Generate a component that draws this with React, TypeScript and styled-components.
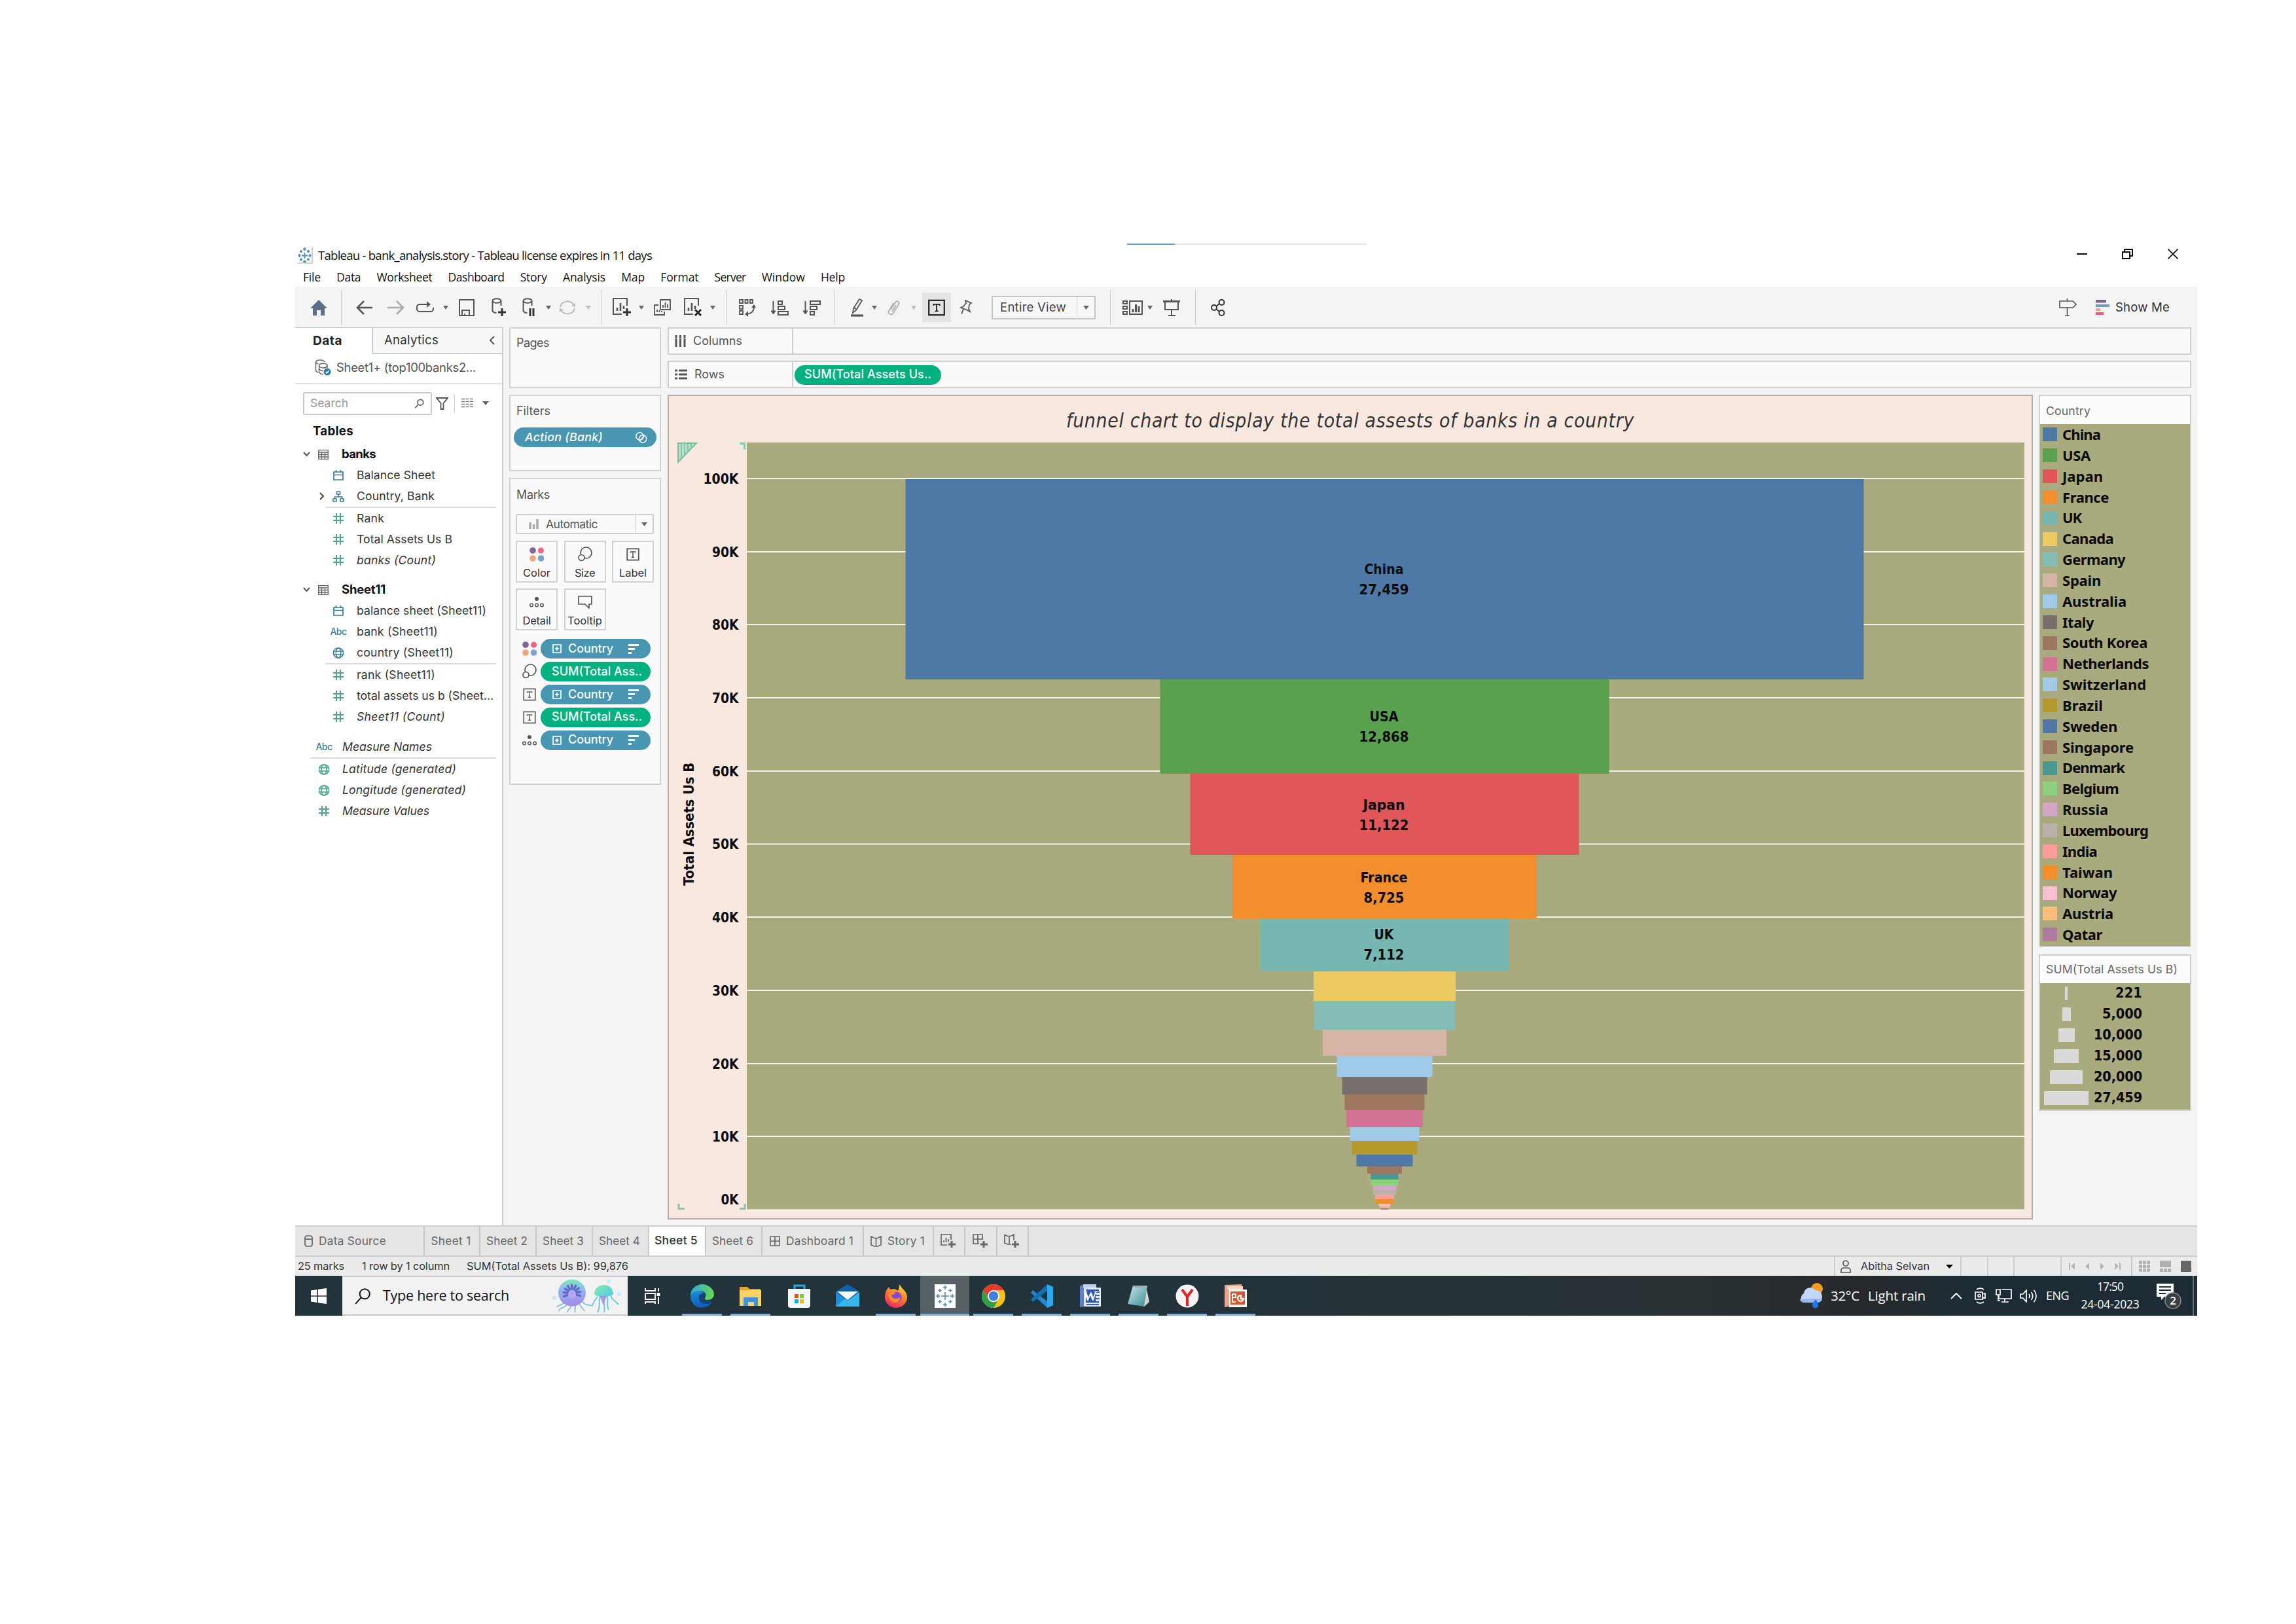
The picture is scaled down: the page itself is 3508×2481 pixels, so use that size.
import React, { useLayoutEffect, useRef, useState } from 'react';
import styled, { createGlobalStyle, css } from 'styled-components';

const UI = "Inter, 'Liberation Sans', sans-serif";
const SYS = "'Open Sans', 'Noto Sans', sans-serif";
const VIZ = "'DejaVu Sans Condensed', 'DejaVu Sans', sans-serif";

const Global = createGlobalStyle`
  *, *::before, *::after { box-sizing: border-box; }
  html, body { margin: 0; background: #fff; }
  svg { display: block; flex: none; }
`;

/* ---------- text ---------- */

type TextProps = {
  children: string;
  w?: number;
  size?: number;
  font?: string;
  weight?: number;
  italic?: boolean;
  color?: string;
};

const TextBox = styled.span<{ $size: number; $font: string; $weight: number; $italic?: boolean; $color: string }>`
  display: inline-block;
  flex: none;
  white-space: pre;
  line-height: 1.25;
  font-family: ${(p) => p.$font};
  font-size: ${(p) => p.$size}px;
  font-weight: ${(p) => p.$weight};
  font-style: ${(p) => (p.$italic ? 'italic' : 'normal')};
  font-stretch: ${(p) => (p.$font === VIZ ? 'condensed' : 'normal')};
  color: ${(p) => p.$color};
`;

/* Tracks its letters so that the run fills the given width. */
function Text({ children, w, size = 18, font = UI, weight = 400, italic, color = '#333' }: TextProps) {
  const ref = useRef<HTMLSpanElement>(null);
  const [tracking, setTracking] = useState(0);
  useLayoutEffect(() => {
    if (w && ref.current) setTracking((w - ref.current.getBoundingClientRect().width) / children.length);
  }, []);
  return (
    <TextBox ref={ref} $size={size} $font={font} $weight={weight} $italic={italic} $color={color} style={{ letterSpacing: tracking }}>
      {children}
    </TextBox>
  );
}

/* ---------- icons ---------- */

const Svg = ({ w, h, children, stroke = '#555', sw = 2 }: { w: number; h: number; children: React.ReactNode; stroke?: string; sw?: number }) => (
  <svg width={w} height={h} viewBox={`0 0 ${w} ${h}`} fill="none" stroke={stroke} strokeWidth={sw}>
    {children}
  </svg>
);

const Caret = ({ c = '#666', w = 8 }: { c?: string; w?: number }) => (
  <Svg w={w} h={6} stroke="none"><path d={`M0 0h${w}L${w / 2} 6z`} fill={c} /></Svg>
);

const HomeIcon = () => (
  <Svg w={26} h={24} stroke="none">
    <path d="M13 0L26 13h-4v11h-6v-8h-6v8H4V13H0z" fill="#5b6f88" />
  </Svg>
);
const BackIcon = () => <Svg w={26} h={22} sw={2.6}><path d="M13 1L3 11l10 10M3 11h23" /></Svg>;
const ForwardIcon = () => <Svg w={26} h={22} stroke="#aaa" sw={2.6}><path d="M14 1l10 10-10 10M24 11H0" /></Svg>;
const ReplayIcon = () => (
  <Svg w={27} h={22}>
    <path d="M11 6H5a4 4 0 0 0-4 4v3a4 4 0 0 0 4 4h17a4 4 0 0 0 4-4v-2" /><path d="M10 6h10" />
    <path d="M16 1l6 5-6 5z" fill="#555" stroke="none" />
  </Svg>
);
const SaveIcon = () => (
  <Svg w={24} h={26}><path d="M1 1h22v24H1zM5 25v-8h11v8M9 25v-3" /></Svg>
);
const Cylinder = ({ x = 0 }: { x?: number }) => (
  <g><ellipse cx={8 + x} cy="4.5" rx="6.5" ry="3.3" /><path d={`M${1.5 + x} 5v15c1 2 3 3 6 3M${14.5 + x} 5v7`} /></g>
);
const AddDataIcon = () => (
  <Svg w={22} h={29}><Cylinder /><path d="M16 16v12M10 22h12" stroke="#333" strokeWidth="3" /></Svg>
);
const PauseDataIcon = () => (
  <Svg w={20} h={29}><Cylinder /><path d="M12 16v12M17 16v12" stroke="#333" strokeWidth="3" /></Svg>
);
const RefreshIcon = () => (
  <Svg w={26} h={24} stroke="#bbb"><path d="M2 11a11 10 0 0 1 20-4M24 13a11 10 0 0 1-20 4" /><path d="M25 5v6l-6-2zM1 19v-6l6 2z" fill="#bbb" stroke="none" /></Svg>
);
const Chart = () => <g><path d="M22 12V1H1v24h13" /><path d="M7 20v-5M12 20V8M17 17v-5" strokeWidth="2.6" /></g>;
const NewSheetIcon = () => <Svg w={28} h={29}><Chart /><path d="M22 16v12M16 22h12" stroke="#333" strokeWidth="3" /></Svg>;
const ClearIcon = () => <Svg w={28} h={29}><Chart /><path d="M17 18l9 9M26 18l-9 9" stroke="#222" strokeWidth="3" /></Svg>;
const DuplicateIcon = () => (
  <Svg w={26} h={26} sw={1.8}><path d="M10 1h15v15H10zM7 9H1v15h15v-5M14 13v-4M17.500 13V5M21 13V8M5 20v-4M8.500 20v-3M12 20v-2" /></Svg>
);
const SwapIcon = () => (
  <Svg w={26} h={28} sw={1.8}>
    <path d="M1 2h5v5H1zM9.500 2h4v5h-4zM17 2h4v5h-4zM1 11h5v5H1zM1 19h5v5H1zM23 13c0 6-4 10-11 11" />
    <path d="M19 14l4-5 3 5zM14 19l-5 5 5 4z" fill="#555" stroke="none" />
  </Svg>
);
const SortAscIcon = () => (
  <Svg w={27} h={26}><path d="M3.500 3v17M11 3h6v5h-6zM11 11h10v5H11zM11 19h15v5H11z" /><path d="M0 18h7l-3.500 5z" fill="#555" stroke="#555" strokeWidth="1" /></Svg>
);
const SortDescIcon = () => (
  <Svg w={28} h={26}><path d="M4.500 3v17M12 3h15v5H12zM12 11h10v5H12zM12 19h6v5h-6z" /><path d="M1 18h7l-3.500 5z" fill="#555" stroke="#555" strokeWidth="1" /></Svg>
);
const PenIcon = () => (
  <Svg w={20} h={29} sw={1.8}><path d="M3 23l1-7 9-14 4 2-9 15zM5 15l4 3" /><path d="M0 27h19" strokeWidth="3.200" /></Svg>
);
const ClipIcon = () => (
  <Svg w={20} h={24} stroke="#b5b5b5"><path d="M5 15L12 4c2-4 7-1 5 3L9 20c-3 5-9 1-7-3L9 5M13 8L7 18" /></Svg>
);
const LabelGlyph = ({ s = 26, c = '#222' }: { s?: number; c?: string }) => (
  <Svg w={s} h={s} stroke={c} sw={s > 22 ? 2.2 : 1.8}>
    <rect x="1.200" y={s * 0.07} width={s - 2.4} height={s * 0.86} />
    <path d={`M${s * 0.32} ${s * 0.38}V${s * 0.3}h${s * 0.36}v${s * 0.08}M${s * 0.5} ${s * 0.3}v${s * 0.4}M${s * 0.4} ${s * 0.71}h${s * 0.2}`} strokeWidth={s > 22 ? 1.8 : 1.5} />
  </Svg>
);
const PinIcon = () => (
  <Svg w={20} h={24} sw={1.8}><path d="M9 1l9 4-3 2-1 7 2 4-6-3-8-3 4-2 4-5zM6 14l-3 8" /></Svg>
);
const CardsIcon = () => (
  <Svg w={31} h={22}><path d="M1 1h6v4H1zM1 9h6v4H1zM1 17h6v4H1zM11 1h19v20H11z" /><path d="M16 18v-5M20.500 18V6M25 18V9" strokeWidth="3" /></Svg>
);
const PresentIcon = () => (
  <Svg w={26} h={26}><path d="M0 3.500h26" strokeWidth="3" /><path d="M3 4v12h20V4M13 0v3M13 16v8M8 25h11" /></Svg>
);
const ShareIcon = () => (
  <Svg w={22} h={26} stroke="#333"><circle cx="5" cy="13" r="4" /><circle cx="16.500" cy="5" r="4" /><circle cx="16.500" cy="21" r="4" /><path d="M8 11l5-4M8 15l5 4" /></Svg>
);
const SignpostIcon = () => (
  <Svg w={27} h={27} sw={1.6}><path d="M1 4h20l5 5-5 5H1zM12.500 0v4M12.500 14v12M9 26h7" /></Svg>
);
const ShowMeIcon = () => (
  <Svg w={21} h={23} stroke="none">
    <path d="M0 0h16v4.500H0z" fill="#7b6592" /><path d="M0 7h21v4H0z" fill="#6d9cc9" />
    <path d="M0 13h7v4H0z" fill="#f6a27c" /><path d="M0 19h12v4H0z" fill="#ed5f78" />
  </Svg>
);
const AppBadge = () => (
  <svg width={23} height={26} viewBox="0 0 23 26" fill="none" strokeWidth="1.800">
    <path d="M22 1v24H0" stroke="#c4c4c4" strokeWidth="1.500" />
    <path d="M10.500 9v9M6 13.500h9M10.500 1v5M8 3.500h5M10.500 20.500v4M8 22.500h5M2.500 11v5M.500 13.500h4M18.500 11v5M16.500 13.500h4M5 5v4M3 7h4M16 5v4M14 7h4M5 17.500v4M3 19.500h4M16 17.500v4M14 19.500h4" stroke="#4790b8" />
  </svg>
);
const Search = ({ s, c = '#666', sw = 2 }: { s: number; c?: string; sw?: number }) => (
  <svg width={s} height={s} viewBox="0 0 24 24" fill="none" stroke={c} strokeWidth={sw}><circle cx="15" cy="9" r="7" /><path d="M10 14l-8 9" /></svg>
);
const FourDots = ({ s = 22 }: { s?: number }) => (
  <svg width={s} height={s} viewBox="0 0 22 22">
    <circle cx="5" cy="5" r="4.800" fill="#7d6796" /><circle cx="17.500" cy="5" r="4.500" fill="#f2657f" />
    <circle cx="5" cy="17" r="4.800" fill="#f3a474" /><circle cx="17.500" cy="17" r="4.800" fill="#7aa3d0" />
  </svg>
);
const SizeGlyph = () => (
  <Svg w={22} h={23} sw={1.7}><circle cx="12.500" cy="9.500" r="8.500" /><circle cx="5.500" cy="17" r="4.500" fill="#fafafa" /></Svg>
);
const DetailGlyph = () => (
  <Svg w={22} h={16} sw={1.5}><circle cx="11" cy="3" r="3" fill="#555" stroke="none" /><circle cx="3" cy="12.500" r="2.300" /><circle cx="11" cy="12.500" r="2.300" /><circle cx="19" cy="12.500" r="2.300" /></Svg>
);
const TooltipGlyph = () => <Svg w={22} h={20} sw={1.7}><path d="M1 1h20v12h-4v6l-6-6H1z" /></Svg>;

const TableIcon = () => (
  <Svg w={16} h={15} stroke="#666" sw={1.3}><path d="M.7.700h14.600v13.600H.7zM.7 4h14.600M.7 7.500h14.600M.7 11h14.600M5.500 4v10M10.500 4v10" /></Svg>
);
const CalendarIcon = () => <Svg w={16} h={16} stroke="#3a7d99" sw={1.7}><path d="M1 3h14v12H1zM1 7.500h14M4.500 0v4M11.500 0v4" /></Svg>;
const HierarchyIcon = () => (
  <Svg w={18} h={17} stroke="#3a7d99" sw={1.6}><path d="M6.500 1h5v4h-5zM1 12h5v4H1zM12 12h5v4h-5zM9 5v4M3.500 12V9h11v3" /></Svg>
);
const HashIcon = () => <Svg w={16} h={16} stroke="#4fa68b" sw={2}><path d="M5 0v16M11 0v16M0 5h16M0 11h16" /></Svg>;
const GlobeIcon = ({ c }: { c: string }) => (
  <Svg w={18} h={17} stroke={c} sw={1.5}><circle cx="9" cy="8.500" r="7.600" /><ellipse cx="9" cy="8.500" rx="3.700" ry="7.600" /><path d="M1 6h16M1 11h16" /></Svg>
);

/* ---------- frame ---------- */

const Page = styled.div`
  width: 3508px;
  height: 2481px;
  padding: 372px 0 0 451px;
  background: #fff;
  overflow: hidden;
`;
const Win = styled.div`
  width: 2906px;
  height: 1638px;
  display: flex;
  flex-direction: column;
`;
const Progress = styled.div`
  display: flex;
  height: 2px;
  flex: none;
  padding-left: 1271px;
  &::before { content: ''; width: 73px; background: #6ba3d2; }
  &::after { content: ''; width: 293px; background: #e2e4e8; }
`;
const TitleBar = styled.div`
  height: 35px;
  flex: none;
  display: flex;
  align-items: center;
  padding: 0 29px 4px 4px;
  gap: 8px;
`;
const WindowButtons = styled.div`
  margin-left: auto;
  display: flex;
  align-items: center;
  gap: 53px;
  padding-bottom: 4px;
`;
const Menu = styled.div`
  height: 29px;
  flex: none;
  display: flex;
  align-items: center;
  gap: 24.2px;
  padding-left: 12px;
`;
const Toolbar = styled.div`
  height: 62px;
  flex: none;
  display: flex;
  align-items: center;
  background: #f4f4f4;
  padding: 1px 42px 0 0;
`;
const Tool = styled.div<{ $ml: number; $w?: number }>`
  margin-left: ${(p) => p.$ml}px;
  width: ${(p) => (p.$w ? p.$w + 'px' : 'auto')};
  flex: none;
  display: flex;
  align-items: center;
  justify-content: center;
`;
const ActiveTool = styled(Tool)`
  height: 45px;
  background: #e4e4e4;
`;
const Divider = styled.div<{ $ml: number }>`
  width: 1px;
  height: 53px;
  flex: none;
  margin-left: ${(p) => p.$ml}px;
  background: #ccc;
`;
const Spacer = styled.div`flex: 1;`;
const ViewSelect = styled.div`
  margin-left: 29px;
  width: 159px;
  height: 36px;
  flex: none;
  display: flex;
  align-items: stretch;
  border: 2px solid #c4c4c4;
  background: #f8f8f8;
`;
const ViewValue = styled.div`
  flex: 1;
  display: flex;
  align-items: center;
  padding-left: 11px;
`;
const SelectArrow = styled.div<{ $w: number }>`
  width: ${(p) => p.$w}px;
  display: flex;
  align-items: center;
  justify-content: center;
  border-left: 1px solid #d0d0d0;
`;

const Body = styled.div`
  height: 1372px;
  flex: none;
  display: flex;
  background: #f4f4f4;
`;

/* ---------- data pane ---------- */

const DataPane = styled.div`
  width: 318px;
  flex: none;
  background: #fff;
  border-right: 2px solid #cfcfcf;
`;
const PaneTabs = styled.div`
  display: flex;
  height: 41px;
`;
const DataTab = styled.div`
  width: 117px;
  display: flex;
  align-items: center;
  padding-left: 27px;
  border-top: 1px solid #ccc;
`;
const AnalyticsTab = styled.div`
  flex: 1;
  display: flex;
  align-items: center;
  justify-content: space-between;
  padding: 0 11px 0 17px;
  background: #f8f8f8;
  border: solid #ccc;
  border-width: 1px 0 2px 2px;
`;
const SourceRow = styled.div`
  height: 46px;
  display: flex;
  align-items: center;
  gap: 8px;
  padding: 0 0 3px 30px;
  border-bottom: 2px solid #e2e2e2;
`;
const SearchRow = styled.div`
  height: 58px;
  display: flex;
  align-items: center;
  padding-left: 12px;
`;
const SearchBox = styled.div`
  width: 197px;
  height: 35px;
  display: flex;
  align-items: center;
  justify-content: space-between;
  padding: 0 10px 0 9px;
  border: 2px solid #ccc;
  border-radius: 2px;
  margin-right: 6px;
`;
const Thin = styled.div`
  width: 1px;
  height: 27px;
  background: #ccc;
  margin: 0 10px 0 9px;
`;
const TablesHead = styled.div`
  height: 33px;
  display: flex;
  align-items: center;
  padding: 0 0 6px 27px;
`;
const FieldRow = styled.div<{ $indent: number }>`
  height: 32px;
  display: flex;
  align-items: center;
  padding-left: ${(p) => p.$indent}px;
`;
const IconSlot = styled.div<{ $w: number }>`
  width: ${(p) => p.$w}px;
  flex: none;
  display: flex;
  justify-content: center;
  align-items: center;
`;
const Rule = styled.div<{ $ml: number }>`
  height: 2px;
  margin: 0 9px 0 ${(p) => p.$ml}px;
  background: #dcdcdc;
`;
const Gap = styled.div<{ $h: number }>`height: ${(p) => p.$h}px;`;

type FieldKind = 'date' | 'tree' | 'num' | 'abc' | 'geo' | 'geog';
const fieldIcon = (k: FieldKind) => {
  switch (k) {
    case 'date': return <CalendarIcon />;
    case 'tree': return <HierarchyIcon />;
    case 'num': return <HashIcon />;
    case 'geo': return <GlobeIcon c="#3a7d99" />;
    case 'geog': return <GlobeIcon c="#45a888" />;
    default: return <Text size={14} weight={500} color="#3a7d99" w={25}>Abc</Text>;
  }
};
const Field = ({ kind, name, w, italic, top, expand }: { kind: FieldKind; name: string; w: number; italic?: boolean; top?: boolean; expand?: boolean }) => (
  <FieldRow $indent={top ? 26 : 33}>
    {!top && <IconSlot $w={16}>{expand && <Svg w={8} h={12} stroke="#444"><path d="M1 1l5 5-5 5" /></Svg>}</IconSlot>}
    <IconSlot $w={top ? 36 : 34}>{fieldIcon(kind)}</IconSlot>
    <IconSlot $w={top ? 10 : 11} />
    <Text size={17.6} w={w} italic={italic}>{name}</Text>
  </FieldRow>
);
const TableRow = ({ name, w }: { name: string; w: number }) => (
  <FieldRow $indent={11}>
    <IconSlot $w={12}><Svg w={11} h={8} stroke="#555"><path d="M1 1l4.500 5L10 1" /></Svg></IconSlot>
    <IconSlot $w={40}><TableIcon /></IconSlot>
    <IconSlot $w={8} />
    <Text size={18.5} weight={650} color="#111" w={w}>{name}</Text>
  </FieldRow>
);

/* ---------- cards ---------- */

const Cards = styled.div`
  width: 232px;
  margin-left: 9px;
  flex: none;
  display: flex;
  flex-direction: column;
  gap: 10px;
`;
const Card = styled.div<{ $h: number }>`
  height: ${(p) => p.$h}px;
  flex: none;
  background: #fafafa;
  border: 2px solid #d2d2d2;
  display: flex;
  flex-direction: column;
`;
const CardTitle = styled.div<{ $h: number }>`
  height: ${(p) => p.$h}px;
  flex: none;
  display: flex;
  align-items: center;
  padding: 1px 0 0 9px;
`;
const Pill = styled.div<{ $w: number; $c: string; $pl: number }>`
  width: ${(p) => p.$w}px;
  height: 30px;
  flex: none;
  border-radius: 15px;
  background: ${(p) => p.$c};
  display: flex;
  align-items: center;
  padding: 0 14px 0 ${(p) => p.$pl}px;
`;
const FilterPill = styled(Pill)`
  margin: 3px 0 0 5px;
  justify-content: space-between;
`;
const MarkSelect = styled.div`
  margin: 6px 0 10px 8px;
  width: 211px;
  height: 31px;
  display: flex;
  border: 2px solid #d0d0d0;
  border-radius: 2px;
`;
const MarkValue = styled.div`
  flex: 1;
  display: flex;
  align-items: center;
  gap: 11px;
  padding-left: 18px;
`;
const MarkGrid = styled.div`
  display: grid;
  grid-template-columns: repeat(3, 64px);
  grid-auto-rows: 64px;
  gap: 9px 9.500px;
  padding-left: 8px;
`;
const MarkButton = styled.div`
  border: 2px solid #d2d2d2;
  display: flex;
  flex-direction: column;
  align-items: center;
  justify-content: space-between;
  padding-bottom: 2px;
`;
const MarkIcon = styled.div`
  height: 38px;
  display: flex;
  align-items: center;
`;
const Encodings = styled.div`
  padding: 13px 0 0 18px;
  display: flex;
  flex-direction: column;
  gap: 4.9px;
`;
const Encoding = styled.div`
  display: flex;
  align-items: center;
`;
const Dim = () => (
  <Pill $w={168} $c="#4996b2" $pl={18}>
    <Svg w={14} h={14} stroke="#fff" sw={1.7}><path d="M1 1h12v12H1zM7 4v6M4 7h6" /></Svg>
    <IconSlot $w={10} />
    <Text size={18} weight={550} color="#fff" w={69}>Country</Text>
    <Spacer />
    <Svg w={16} h={15} stroke="none"><path d="M0 0h16v3H0zM0 6h10v3H0zM0 12h5v3H0z" fill="#fff" /></Svg>
    <IconSlot $w={4} />
  </Pill>
);
const Measure = () => (
  <Pill $w={168} $c="#00b180" $pl={17}><Text size={18} weight={500} color="#fff" w={138}>SUM(Total Ass..</Text></Pill>
);

/* ---------- shelves + view ---------- */

const Main = styled.div`
  width: 2328px;
  margin-left: 10px;
  display: flex;
  flex-direction: column;
`;
const Shelf = styled.div`
  height: 42px;
  flex: none;
  display: flex;
  border: 2px solid #d0d0d0;
  background: #fafafa;
  margin-bottom: 9px;
`;
const ShelfHead = styled.div`
  width: 190px;
  display: flex;
  align-items: center;
  gap: 11px;
  padding-left: 9px;
  border-right: 2px solid #d0d0d0;
`;
const ShelfBody = styled.div`
  flex: 1;
  display: flex;
  align-items: center;
  padding: 1px 0 0 2px;
`;
const ViewRow = styled.div`
  display: flex;
  align-items: flex-start;
  gap: 9px;
  padding-top: 1px;
`;
const Viz = styled.div`
  width: 2086px;
  height: 1260px;
  background: #f9e8e0;
  border: 2px solid #b5b0ad;
  display: flex;
  flex-direction: column;
`;
const VizTitle = styled.div`
  height: 71px;
  flex: none;
  display: flex;
  align-items: center;
  justify-content: center;
  padding-top: 4px;
`;
const Legends = styled.div`
  width: 233px;
  display: flex;
  flex-direction: column;
  gap: 11px;
`;
const Legend = styled.div<{ $h: number }>`
  height: ${(p) => p.$h}px;
  border: 2px solid #cfcfcf;
  background: #a9aa7e;
  display: flex;
  flex-direction: column;
`;
const LegendHead = styled.div<{ $h: number; $pt: number }>`
  height: ${(p) => p.$h}px;
  flex: none;
  background: #fcfcfc;
  display: flex;
  align-items: center;
  padding: ${(p) => p.$pt}px 0 0 9px;
`;
const LegendItems = styled.div`
  flex: none;
  display: flex;
  flex-direction: column;
`;
const LegendItem = styled.div`
  height: 31.84px;
  display: flex;
  align-items: center;
  padding-left: 4px;
  gap: 8px;
`;
const Swatch = styled.div<{ $c: string }>`
  width: 22px;
  height: 21px;
  background: ${(p) => p.$c};
`;
const SizeItem = styled.div`
  height: 31.84px;
  display: flex;
  align-items: center;
`;
const SizeCell = styled.div`
  width: 80px;
  display: flex;
  justify-content: center;
`;
const SizeBar = styled.div<{ $w: number }>`
  width: ${(p) => p.$w}px;
  height: 21px;
  background: #d9d9d9;
`;
const SizeValue = styled.div`
  width: 76px;
  display: flex;
  justify-content: flex-end;
`;

type Country = { name: string; w: number; bottom: number; color: string; tw: number; label?: [string, number, number, number] };
const countries: Country[] = [
  { name: 'China', w: 1464, bottom: 1038, color: '#4e79a7', tw: 58, label: ['27,459', 60, 76, 869] },
  { name: 'USA', w: 686, bottom: 1182, color: '#59a14f', tw: 43, label: ['12,868', 44, 76, 1094] },
  { name: 'Japan', w: 594, bottom: 1306, color: '#e15759', tw: 62, label: ['11,122', 64, 76, 1229] },
  { name: 'France', w: 465, bottom: 1403, color: '#f28e2b', tw: 71, label: ['8,725', 72, 62, 1340] },
  { name: 'UK', w: 379, bottom: 1484, color: '#76b7b2', tw: 29, label: ['7,112', 30, 62, 1427] },
  { name: 'Canada', w: 217, bottom: 1529, color: '#eecb62', tw: 78 },
  { name: 'Germany', w: 215, bottom: 1573, color: '#86bcb6', tw: 96 },
  { name: 'Spain', w: 189, bottom: 1613, color: '#d7b5a6', tw: 59 },
  { name: 'Australia', w: 146, bottom: 1645, color: '#a0cbe8', tw: 98 },
  { name: 'Italy', w: 130, bottom: 1672, color: '#79706e', tw: 48 },
  { name: 'South Korea', w: 122, bottom: 1696, color: '#9d7660', tw: 130 },
  { name: 'Netherlands', w: 117, bottom: 1722, color: '#d37295', tw: 132 },
  { name: 'Switzerland', w: 106, bottom: 1743, color: '#a0cbe8', tw: 128 },
  { name: 'Brazil', w: 100, bottom: 1764, color: '#b6992d', tw: 62 },
  { name: 'Sweden', w: 86, bottom: 1782, color: '#4e79a7', tw: 84 },
  { name: 'Singapore', w: 53, bottom: 1793, color: '#9d7660', tw: 109 },
  { name: 'Denmark', w: 42, bottom: 1802, color: '#499894', tw: 95 },
  { name: 'Belgium', w: 42, bottom: 1811, color: '#8cd17d', tw: 86 },
  { name: 'Russia', w: 36, bottom: 1818, color: '#d4a6c8', tw: 70 },
  { name: 'Luxembourg', w: 35, bottom: 1825, color: '#bab0ac', tw: 131 },
  { name: 'India', w: 29, bottom: 1832, color: '#ff9d9a', tw: 53 },
  { name: 'Taiwan', w: 28, bottom: 1839, color: '#f28e2b', tw: 77 },
  { name: 'Norway', w: 18, bottom: 1842.5, color: '#fabfd2', tw: 83 },
  { name: 'Austria', w: 15, bottom: 1845.500, color: '#ffbe7d', tw: 78 },
  { name: 'Qatar', w: 12, bottom: 1848, color: '#b07aa1', tw: 61 },
];
const ticks: [string, number][] = [
  ['100K', 731], ['90K', 843], ['80K', 954], ['70K', 1066], ['60K', 1178],
  ['50K', 1289.5], ['40K', 1401], ['30K', 1513], ['20K', 1625], ['10K', 1736],
];

const VizText = styled.text<{ $anchor?: string }>`
  font-family: ${VIZ};
  font-stretch: condensed;
  font-size: 21.5px;
  font-weight: 700;
  fill: #0b0b0b;
  text-anchor: ${(p) => p.$anchor || 'middle'};
`;

const Funnel = () => (
  <svg width={2082} height={1185} viewBox="1022 676 2082 1185">
    <rect x="1141" y="676" width="1952" height="1172" fill="#a9aa7e" />
    <rect x="1141" y="1847.500" width="1952" height="2" fill="#fdf6f1" />
    {ticks.map(([t, y]) => (
      <g key={t}>
        <rect x="1141" y={y - 1} width="1952" height="2" fill="#f6f4ea" />
        <VizText $anchor="end" x="1128.500" y={y + 7.5} textLength={t.length === 4 ? 54 : 40.500} lengthAdjust="spacingAndGlyphs">{t}</VizText>
      </g>
    ))}
    <VizText $anchor="end" x="1128.500" y="1839.500" textLength="27" lengthAdjust="spacingAndGlyphs">0K</VizText>
    <VizText transform="translate(1059.500 1259) rotate(-90)" x="0" y="0" textLength="188" lengthAdjust="spacingAndGlyphs">Total Assets Us B</VizText>
    {countries.map((c, i) => {
      const top = i ? countries[i - 1].bottom : 732;
      return <rect key={c.name} x={2115.5 - c.w / 2} y={top} width={c.w} height={c.bottom - top} fill={c.color} />;
    })}
    {countries.map((c) => c.label && (
      <g key={c.name}>
        <VizText x="2114.500" y={c.label[3] + 7.5} textLength={c.label[1]} lengthAdjust="spacingAndGlyphs">{c.name}</VizText>
        <VizText x="2114.500" y={c.label[3] + 39} textLength={c.label[2]} lengthAdjust="spacingAndGlyphs">{c.label[0]}</VizText>
      </g>
    ))}
    <g fill="none" stroke="#86c5ac" strokeWidth="3">
      <path d="M1130 677.500h7.500v9M1037 1839v7.500h9M1138 1839v7.500h-8" />
    </g>
    <path d="M1036 677h28l-28 29z" fill="#b9e0cd" stroke="#79bf9f" strokeWidth="2" />
    <path d="M1041 678v22M1046 678v17M1051 678v12M1056 678v7" stroke="#79bf9f" strokeWidth="1.500" />
  </svg>
);

/* ---------- bottom ---------- */

const SheetTabs = styled.div`
  height: 46px;
  flex: none;
  display: flex;
  background: #e5e5e5;
  border-top: 2px solid #cdcdcd;
`;
const SheetTab = styled.div<{ $w: number; $on?: boolean; $pl?: number }>`
  width: ${(p) => p.$w}px;
  flex: none;
  display: flex;
  align-items: center;
  justify-content: ${(p) => (p.$pl ? 'flex-start' : 'center')};
  gap: 9px;
  padding: 0 ${(p) => (p.$pl ? 0 : 3)}px 0 ${(p) => p.$pl || 0}px;
  border-right: 2px solid #c8c8c8;
  ${(p) => p.$on && css`background: #fff; padding-bottom: 3px;`}
`;
const Status = styled.div`
  height: 31px;
  flex: none;
  display: flex;
  align-items: center;
  background: #ebebeb;
  border-top: 2px solid #cfcfcf;
  padding-left: 4px;
`;
const StatusCell = styled.div<{ $w: number; $pl?: number; $gap?: number }>`
  width: ${(p) => p.$w}px;
  height: 100%;
  display: flex;
  align-items: center;
  gap: ${(p) => p.$gap || 0}px;
  padding-left: ${(p) => p.$pl || 0}px;
  border-left: 2px solid #cbcbcb;
`;
const Taskbar = styled.div`
  height: 61px;
  flex: none;
  display: flex;
  background: linear-gradient(90deg, #22333b 0, #22333b 45%, #293134 74%, #26292c 82%, #1d2c34 88%);
`;
const Start = styled.div`
  width: 72px;
  display: flex;
  align-items: center;
  justify-content: center;
`;
const TaskSearch = styled.div`
  width: 436px;
  display: flex;
  align-items: center;
  padding-left: 18px;
  background: #f2f2f2;
  border: solid #c9c9c9;
  border-width: 2px 0 2px 0;
`;
const TaskView = styled.div`
  width: 77px;
  display: flex;
  align-items: center;
  justify-content: center;
`;
const TaskApp = styled.div<{ $run?: boolean; $on?: boolean }>`
  width: 74.1px;
  position: relative;
  display: flex;
  align-items: center;
  justify-content: center;
  background: ${(p) => (p.$on ? '#566166' : 'transparent')};
  &::after {
    content: '';
    position: absolute;
    bottom: 0;
    left: ${(p) => (p.$on ? 0 : 6)}px;
    right: ${(p) => (p.$on ? 0 : 7)}px;
    height: ${(p) => (p.$run ? 3 : 0)}px;
    background: #76b0f0;
  }
`;
const Tray = styled.div<{ $ml: number }>`
  margin-left: ${(p) => p.$ml}px;
  flex: none;
  display: flex;
  align-items: center;
`;
const Clock = styled.div`
  width: 90px;
  margin-left: 18px;
  display: flex;
  flex-direction: column;
  align-items: center;
  justify-content: center;
  gap: 5px;
`;

const I = ({ children }: { children: React.ReactNode }) => <svg width={38} height={38} viewBox="0 0 38 38">{children}</svg>;

const Edge = () => (
  <I>
    <defs>
      <linearGradient id="eg1" x1="0" y1="0" x2="1" y2="0.300"><stop offset="0" stopColor="#2aa5e0" /><stop offset="1" stopColor="#62d65a" /></linearGradient>
      <linearGradient id="eg2" x1="0" y1="0" x2="0" y2="1"><stop offset="0" stopColor="#1a8fd8" /><stop offset="1" stopColor="#0c5bb5" /></linearGradient>
    </defs>
    <path d="M1 19C1 8 9 1 19 1s18 8 18 15c0 6-5 9-10 9-4 0-5-2-4-3 4-6-1-11-7-11C8 11 2 15 1 19z" fill="url(#eg1)" />
    <path d="M1 19c1-5 6-8 13-8 4 0 7 2 8 4-6-1-9 4-8 9 2 7 11 9 19 5-4 6-10 8-15 8C8 37 1 29 1 19z" fill="url(#eg2)" />
    <path d="M14 24c-1-5 2-9 8-9 2 3 1 6 0 8-1 3 8 4 12 2l-1 4c-8 4-17 2-19-5z" fill="#114f9e" opacity=".6" />
  </I>
);
const Explorer = () => (
  <I><path d="M2 5h12l3 3h17v26H2z" fill="#e0a52d" /><path d="M2 10h33v24H2z" fill="#fbd468" /><path d="M8 34V21h22v13h-6v-6h-9v6z" fill="#3f93d6" /></I>
);
const Store = () => (
  <I><path d="M12 9V3h15v6" fill="none" stroke="#25aee4" strokeWidth="3" /><path d="M2 8h34v25q0 4-4 4H6q-4 0-4-4z" fill="#f4f6f7" />
    <path d="M12 16h6v6h-6z" fill="#f1511b" /><path d="M20 16h6v6h-6z" fill="#80cc28" /><path d="M12 24h6v6h-6z" fill="#00adef" /><path d="M20 24h6v6h-6z" fill="#fbbc09" /></I>
);
const Mail = () => (
  <I><path d="M1 12L19 1l18 11v23H1z" fill="#1360a5" /><path d="M3 12h32L19 25z" fill="#fff" /><path d="M1 13l18 13L1 35z" fill="#1a90df" /><path d="M37 13L19 26l-4-3L1 35h36z" fill="#38b6ec" /></I>
);
const Firefox = () => (
  <I>
    <defs><linearGradient id="ff" x1="0.800" y1="0" x2="0.300" y2="1"><stop offset="0" stopColor="#ffe13d" /><stop offset=".5" stopColor="#ff7a26" /><stop offset="1" stopColor="#f3226d" /></linearGradient></defs>
    <path d="M5 9l3-4 2 4 4-1c3 0 6 1 8 3 2-3 1-7 3-10 1 5 5 7 8 11 2 3 3 6 3 9a17 16 0 0 1-34 0c0-5 1-9 3-12z" fill="url(#ff)" />
    <circle cx="19" cy="21" r="8.500" fill="#8349d6" /><path d="M8 13c4-2 8-1 11 2-3 0-4 2-7 2 0 4 3 6 7 6 3 0 5-1 6-3 1 6-4 10-9 9-6-1-10-9-8-16z" fill="#ff8d2c" />
  </I>
);
const TableauApp = () => (
  <I><path d="M3 1h32v36H3z" fill="#fff" /><path d="M19 13v12M13 19h12M19 3v6M16 6h6M19 29v6M16 32h6M8 16v6M5 19h6M30 16v6M27 19h6M11 8v5M8.500 10.500h5M27 8v5M24.500 10.500h5M11 25v5M8.500 27.500h5M27 25v5M24.500 27.500h5" stroke="#4a8db8" strokeWidth="1.600" /></I>
);
const Chrome = () => (
  <I><circle cx="19" cy="19" r="18" fill="#fbc116" /><path d="M3.400 10A18 18 0 0 1 34.600 10H19a9 9 0 0 0-8.500 6z" fill="#e33b2e" /><path d="M3.400 10A18 18 0 0 0 19 37l8-13.500a9 9 0 0 1-16 0z" fill="#2da04e" /><path d="M3.400 10l8 13a9 9 0 0 1 7.600-13z" fill="#e33b2e" /><circle cx="19" cy="19" r="9" fill="#fff" /><circle cx="19" cy="19" r="7.300" fill="#3d7fe6" /></I>
);
const VsCode = () => (
  <I><path d="M27 1l9 4v28l-9 4L2 14l3-4 22 17z" fill="#1f8ad2" /><path d="M27 1v10L5 28l-3-4z" fill="#1370b3" /><path d="M27 1l9 4v28l-9 4z" fill="#2ba7ee" /></I>
);
const GlyphT = styled.text`
  font-family: 'Liberation Serif', serif;
  font-weight: 700;
  font-size: 21px;
`;
const Word = () => (
  <I><path d="M3 3l24-2v32L3 36z" fill="#5c80c8" /><path d="M8 1h20v5H8z" fill="#c4d2f0" /><path d="M9 6h26v29H9z" fill="#dfe7f8" /><path d="M12 9h20v20H12z" fill="#2f56ac" /><path d="M27 11h6v16h-6z" fill="#dfe7f8" /><path d="M27 13h6M27 18h6M27 23h6M13 32h19" stroke="#3c62b6" strokeWidth="2" /><GlyphT x="8" y="26" fill="#fff">W</GlyphT></I>
);
const Notepad = () => (
  <I>
    <defs><linearGradient id="np" x1="0" y1="0" x2="1" y2="1"><stop offset="0" stopColor="#c6e9ea" /><stop offset="1" stopColor="#3c8b96" /></linearGradient></defs>
    <path d="M30 4l5 24-9 8z" fill="#d9d9d2" /><path d="M10 3h22l-5 32L2 31z" fill="url(#np)" /><path d="M10 3h22v3H9z" fill="#9eb0b2" />
  </I>
);
const Yandex = () => (
  <I><circle cx="19" cy="19" r="17.500" fill="#f6f3f3" /><path d="M11 9l8 11 8-11M19 19v15" fill="none" stroke="#e0262b" strokeWidth="4" /></I>
);
const PowerPoint = () => (
  <I><path d="M2 2l26-1v30L2 36z" fill="#f0a386" /><path d="M6 4h24v5H6z" fill="#fbd9cc" /><path d="M9 9h27v27H9z" fill="#fff" /><path d="M11 12h22v20H11z" fill="#dc5127" /><path d="M14 16h5v5h-5zM14 16v12h5" stroke="#fff" strokeWidth="2" fill="none" /><path d="M27 18a4.500 4.500 0 1 0 4 5h-4z" fill="none" stroke="#fff" strokeWidth="2.400" /></I>
);
const Jellies = () => (
  <svg width={107} height={54} viewBox="0 0 107 54" fill="none">
    <defs>
      <linearGradient id="j1" x1="0.500" y1="0" x2="0.500" y2="1"><stop offset="0" stopColor="#7eeab4" /><stop offset=".35" stopColor="#8fb9ee" /><stop offset="1" stopColor="#a488ea" /></linearGradient>
      <linearGradient id="j2" x1="0" y1="0" x2="1" y2="1"><stop offset="0" stopColor="#86efa9" /><stop offset="1" stopColor="#4cc6e6" /></linearGradient>
    </defs>
    <path d="M24 38c-2 8-12 5-13 12M30 40c0 8-6 6-6 12M36 40c1 6-2 8 0 12M42 38c2 8 6 6 8 12M46 34c4 8 10 6 16 8M20 36c-4 6-10 4-12 8" stroke="#7fc3dd" strokeWidth="1.800" />
    <ellipse cx="31" cy="22" rx="21" ry="20.500" fill="url(#j1)" />
    {Array.from({ length: 9 }, (_, i) => <path key={i} d="M31 10v6" stroke="#5d69c4" strokeWidth="3.400" strokeLinecap="round" transform={`rotate(${i * 27 - 110} 31 23)`} />)}
    <circle cx="31" cy="25" r="6" fill="#b7a5f2" />
    <path d="M74 28c-4 8 2 12-4 24M80 28c-2 8 2 14 0 24M85 28c2 8-2 12 2 20M90 26c2 8 8 8 12 14M70 28c-4 6-6 6-8 14" stroke="#55cfd6" strokeWidth="1.800" />
    <path d="M65 24c0-9 7-14 15-14s14 6 14 14c-4 3-6 2-9 4-4 2-8 2-11 0-4-1-6-1-9-4z" fill="url(#j2)" /><path d="M73 27l6 14 5-14z" fill="#a987e8" opacity=".8" />
    <circle cx="4" cy="30" r="3" fill="#c6e4f5" /><circle cx="87" cy="5" r="3" fill="#cdeef2" /><circle cx="103" cy="24" r="3" fill="#cfe6f8" />
  </svg>
);
const Weather = () => (
  <svg width={38} height={40} viewBox="0 0 38 40">
    <circle cx="28" cy="9" r="9" fill="#f79a1e" />
    <path d="M8 30a8 8 0 0 1 0-14C9 7 20 4 26 11c8 0 12 8 9 14-1 3-4 5-7 5z" fill="#c3d6f8" />
    <path d="M2 24h34c0 4-4 6-8 6H8c-3 0-6-3-6-6z" fill="#98b8f2" />
    <path d="M26 25c3 4 4 6 4 9a4 4 0 0 1-9 0c0-4 3-6 5-9z" fill="#1c78ec" />
  </svg>
);

const sys = { font: SYS, color: '#111' };

export default function App() {
  return (
    <Page>
      <Global />
      <Win>
        <Progress />
        <TitleBar>
          <AppBadge />
          <Text {...sys} size={18.6} w={510}>Tableau - bank_analysis.story - Tableau license expires in 11 days</Text>
          <WindowButtons>
            <Svg w={16} h={2} stroke="#000"><path d="M0 1h16" /></Svg>
            <Svg w={17} h={16} stroke="#000" sw={1.8}><path d="M1 5h11v10H1zM4 5V1h12v10h-4" /></Svg>
            <Svg w={16} h={16} stroke="#000" sw={1.6}><path d="M.500.500l15 15M15.500.500l-15 15" /></Svg>
          </WindowButtons>
        </TitleBar>
        <Menu>
          {([['File', 27], ['Data', 37], ['Worksheet', 85], ['Dashboard', 86], ['Story', 41], ['Analysis', 65], ['Map', 36], ['Format', 58], ['Server', 48], ['Window', 66], ['Help', 37]] as [string, number][]).map(([t, w]) => (
            <Text key={t} {...sys} size={17.5} w={w}>{t}</Text>
          ))}
        </Menu>
        <Toolbar>
          <Tool $ml={23}><HomeIcon /></Tool>
          <Divider $ml={21} />
          <Tool $ml={21}><BackIcon /></Tool>
          <Tool $ml={23}><ForwardIcon /></Tool>
          <Tool $ml={18}><ReplayIcon /></Tool>
          <Tool $ml={14}><Caret /></Tool>
          <Tool $ml={16}><SaveIcon /></Tool>
          <Tool $ml={26}><AddDataIcon /></Tool>
          <Tool $ml={25}><PauseDataIcon /></Tool>
          <Tool $ml={16}><Caret /></Tool>
          <Tool $ml={12}><RefreshIcon /></Tool>
          <Tool $ml={15}><Caret c="#bbb" /></Tool>
          <Divider $ml={15} />
          <Tool $ml={17}><NewSheetIcon /></Tool>
          <Tool $ml={12}><Caret /></Tool>
          <Tool $ml={15}><DuplicateIcon /></Tool>
          <Tool $ml={20}><ClearIcon /></Tool>
          <Tool $ml={12}><Caret /></Tool>
          <Divider $ml={16} />
          <Tool $ml={19}><SwapIcon /></Tool>
          <Tool $ml={23}><SortAscIcon /></Tool>
          <Tool $ml={21}><SortDescIcon /></Tool>
          <Divider $ml={21} />
          <Tool $ml={24}><PenIcon /></Tool>
          <Tool $ml={12}><Caret /></Tool>
          <Tool $ml={16}><ClipIcon /></Tool>
          <Tool $ml={16}><Caret c="#bbb" /></Tool>
          <ActiveTool $ml={9} $w={44}><LabelGlyph /></ActiveTool>
          <Tool $ml={13}><PinIcon /></Tool>
          <ViewSelect>
            <ViewValue><Text size={18.6} w={101} color="#444">Entire View</Text></ViewValue>
            <SelectArrow $w={27}><Caret w={9} /></SelectArrow>
          </ViewSelect>
          <Divider $ml={22} />
          <Tool $ml={18}><CardsIcon /></Tool>
          <Tool $ml={7}><Caret /></Tool>
          <Tool $ml={16}><PresentIcon /></Tool>
          <Divider $ml={23} />
          <Tool $ml={23}><ShareIcon /></Tool>
          <Spacer />
          <Tool $ml={0}><SignpostIcon /></Tool>
          <Tool $ml={29}><ShowMeIcon /></Tool>
          <Tool $ml={9}><Text size={18.600} w={83}>Show Me</Text></Tool>
        </Toolbar>

        <Body>
          <DataPane>
            <PaneTabs>
              <DataTab><Text size={19} weight={650} color="#222" w={45}>Data</Text></DataTab>
              <AnalyticsTab><Text size={18.6} w={83}>Analytics</Text><Svg w={9} h={14}><path d="M8 1L2 7l6 6" /></Svg></AnalyticsTab>
            </PaneTabs>
            <SourceRow>
              <Svg w={25} h={25} sw={1.500} stroke="#666">
                <path d="M15 4C13 0 3 0 1.500 4v13c1 2 3 3 4 3M1.500 4c1 2 3 3 4 3" /><path d="M19 10c0-5-12-5-12.500 0v9c1 2 3 4 6 4M6.500 10c2 4 10 4 12.500 0v3M6.500 15c2 2 4 2.500 6 2.500" />
                <circle cx="19" cy="19" r="5.500" fill="#2d7ea6" stroke="none" /><path d="M16.500 19l2 2 3-4" stroke="#fff" />
              </Svg>
              <Text size={18.4} w={213} color="#555">Sheet1+ (top100banks2...</Text>
            </SourceRow>
            <SearchRow>
              <SearchBox><Text size={17.6} w={58} color="#999">Search</Text><Search s={15} sw={2.8} /></SearchBox>
              <Svg w={19} h={19} sw={1.8}><path d="M1 1h17l-6.500 8v9h-4V9z" /></Svg>
              <Thin />
              <Svg w={18} h={16} stroke="#777" sw={1.5}><path d="M0 1.500h18M0 5.500h18M0 9.500h18M0 13.500h18" strokeDasharray="5 1.500" /></Svg>
              <IconSlot $w={14} />
              <Caret w={10} />
            </SearchRow>
            <TablesHead><Text size={18.600} weight={650} color="#111" w={62}>Tables</Text></TablesHead>
            <TableRow name="banks" w={52} />
            <Field kind="date" name="Balance Sheet" w={120} />
            <Field kind="tree" name="Country, Bank" w={119} expand />
            <Rule $ml={46} />
            <Field kind="num" name="Rank" w={42} />
            <Field kind="num" name="Total Assets Us B" w={146} />
            <Field kind="num" name="banks (Count)" w={121} italic />
            <Gap $h={13} />
            <TableRow name="Sheet11" w={67} />
            <Field kind="date" name="balance sheet (Sheet11)" w={198} />
            <Field kind="abc" name="bank (Sheet11)" w={124} />
            <Field kind="geo" name="country (Sheet11)" w={148} />
            <Rule $ml={46} />
            <Field kind="num" name="rank (Sheet11)" w={120} />
            <Field kind="num" name="total assets us b (Sheet..." w={209} />
            <Field kind="num" name="Sheet11 (Count)" w={135} italic />
            <Gap $h={14} />
            <Field kind="abc" name="Measure Names" w={137} italic top />
            <Rule $ml={23} />
            <Field kind="geog" name="Latitude (generated)" w={174} italic top />
            <Field kind="geog" name="Longitude (generated)" w={189} italic top />
            <Field kind="num" name="Measure Values" w={133} italic top />
          </DataPane>

          <Cards>
            <Card $h={93}><CardTitle $h={43}><Text size={18} w={50} color="#555">Pages</Text></CardTitle></Card>
            <Card $h={117}>
              <CardTitle $h={45}><Text size={18} w={52} color="#555">Filters</Text></CardTitle>
              <FilterPill $w={218} $c="#4996b2" $pl={17}>
                <Text size={17.8} weight={500} italic color="#fff" w={119}>Action (Bank)</Text>
                <Svg w={19} h={17} stroke="#fff" sw={1.500}><circle cx="7.500" cy="6.500" r="5.700" /><circle cx="12" cy="10.500" r="5.700" /><path d="M8 13l7-8" /></Svg>
              </FilterPill>
            </Card>
            <Card $h={469}>
              <CardTitle $h={47}><Text size={18} w={51} color="#555">Marks</Text></CardTitle>
              <MarkSelect>
                <MarkValue>
                  <Svg w={15} h={15} stroke="#aaa" sw={3.500}><path d="M2 15V5M7.500 15V8M13 15V0" /></Svg>
                  <Text size={17.6} w={79} color="#555">Automatic</Text>
                </MarkValue>
                <SelectArrow $w={27}><Caret w={9} /></SelectArrow>
              </MarkSelect>
              <MarkGrid>
                <MarkButton><MarkIcon><FourDots /></MarkIcon><Text size={16.500} w={42}>Color</Text></MarkButton>
                <MarkButton><MarkIcon><SizeGlyph /></MarkIcon><Text size={16.500} w={31}>Size</Text></MarkButton>
                <MarkButton><MarkIcon><LabelGlyph s={20} c="#555" /></MarkIcon><Text size={16.500} w={42}>Label</Text></MarkButton>
                <MarkButton><MarkIcon><DetailGlyph /></MarkIcon><Text size={16.500} w={43}>Detail</Text></MarkButton>
                <MarkButton><MarkIcon><TooltipGlyph /></MarkIcon><Text size={16.500} w={53}>Tooltip</Text></MarkButton>
              </MarkGrid>
              <Encodings>
                <Encoding><IconSlot $w={22}><FourDots s={22} /></IconSlot><IconSlot $w={6} /><Dim /></Encoding>
                <Encoding><IconSlot $w={22}><SizeGlyph /></IconSlot><IconSlot $w={6} /><Measure /></Encoding>
                <Encoding><IconSlot $w={22}><LabelGlyph s={20} c="#666" /></IconSlot><IconSlot $w={6} /><Dim /></Encoding>
                <Encoding><IconSlot $w={22}><LabelGlyph s={20} c="#666" /></IconSlot><IconSlot $w={6} /><Measure /></Encoding>
                <Encoding><IconSlot $w={22}><DetailGlyph /></IconSlot><IconSlot $w={6} /><Dim /></Encoding>
              </Encodings>
            </Card>
          </Cards>

          <Main>
            <Shelf>
              <ShelfHead>
                <Svg w={17} h={18} stroke="#555" sw={3}><path d="M2 0v18M8.500 0v18M15 0v18" strokeDasharray="4 1 14 0" /></Svg>
                <Text size={18} w={75} color="#555">Columns</Text>
              </ShelfHead>
              <ShelfBody />
            </Shelf>
            <Shelf>
              <ShelfHead>
                <Svg w={19} h={16} stroke="#555" sw={3}><path d="M0 2h19M0 8h19M0 14h19" strokeDasharray="4 2 14 0" /></Svg>
                <Text size={18} w={46} color="#555">Rows</Text>
              </ShelfHead>
              <ShelfBody>
                <Pill $w={224} $c="#00b180" $pl={15}><Text size={18} weight={500} color="#fff" w={194}>SUM(Total Assets Us..</Text></Pill>
              </ShelfBody>
            </Shelf>
            <ViewRow>
              <Viz>
                <VizTitle><Text font={VIZ} size={29.8} italic w={868} color="#333">funnel chart to display the total assests of banks in a country</Text></VizTitle>
                <Funnel />
              </Viz>
              <Legends>
                <Legend $h={844}>
                  <LegendHead $h={43} $pt={2}><Text size={17.600} w={68} color="#666">Country</Text></LegendHead>
                  <LegendItems>
                    {countries.map((c) => (
                      <LegendItem key={c.name}>
                        <Swatch $c={c.color} />
                        <Text font="'Noto Sans', sans-serif" size={22} weight={700} color="#0b0b0b" w={c.tw}>{c.name}</Text>
                      </LegendItem>
                    ))}
                  </LegendItems>
                </Legend>
                <Legend $h={239}>
                  <LegendHead $h={42} $pt={0}><Text size={17.600} w={201} color="#666">SUM(Total Assets Us B)</Text></LegendHead>
                  <LegendItems>
                    {([['221', 4, 41], ['5,000', 13, 61], ['10,000', 25, 74], ['15,000', 38, 74], ['20,000', 50, 74], ['27,459', 68, 74]] as [string, number, number][]).map(([t, w, tw]) => (
                      <SizeItem key={t}>
                        <SizeCell><SizeBar $w={w} /></SizeCell>
                        <SizeValue><Text font={VIZ} size={21.500} weight={700} color="#0b0b0b" w={tw}>{t}</Text></SizeValue>
                      </SizeItem>
                    ))}
                  </LegendItems>
                </Legend>
              </Legends>
            </ViewRow>
          </Main>
        </Body>

        <SheetTabs>
          <SheetTab $w={198} $pl={14}>
            <Svg w={13} h={18} stroke="#666" sw={1.700}><rect x="1" y="1" width="11" height="16" rx="3" /><path d="M1 6h11" /></Svg>
            <Text size={17.200} w={103} color="#666">Data Source</Text>
          </SheetTab>
          {([['Sheet 1', 85, 61], ['Sheet 2', 86, 63], ['Sheet 3', 86, 63], ['Sheet 4', 86, 63]] as [string, number, number][]).map(([t, w, tw]) => (
            <SheetTab key={t} $w={w}><Text size={17.200} w={tw} color="#666">{t}</Text></SheetTab>
          ))}
          <SheetTab $w={87} $on><Text size={17.6} weight={500} w={66} color="#333">Sheet 5</Text></SheetTab>
          <SheetTab $w={86}><Text size={17.200} w={63} color="#666">Sheet 6</Text></SheetTab>
          <SheetTab $w={155} $pl={11}>
            <Svg w={16} h={16} stroke="#666" sw={1.700}><path d="M1 1h14v14H1zM8 1v14M1 8h14" /></Svg>
            <Text size={17.200} w={103} color="#666">Dashboard 1</Text>
          </SheetTab>
          <SheetTab $w={107} $pl={10}>
            <Svg w={17} h={17} stroke="#666" sw={1.700}><path d="M1 1l5 2.500h5l5-2.500v13l-5 2H6l-5-2zM8.500 4v12" /></Svg>
            <Text size={17.200} w={57} color="#666">Story 1</Text>
          </SheetTab>
          <SheetTab $w={48}><Svg w={23} h={22} stroke="#666" sw={1.700}><path d="M16 9V1H1v16h9M5 13v-3M8.500 13V6M12 12V8" /><path d="M17 11v10M12 16h11" strokeWidth="3" /></Svg></SheetTab>
          <SheetTab $w={49}><Svg w={23} h={22} stroke="#666" sw={1.700}><path d="M15 9V1H1v14h9M8 1v14M1 8h14" /><path d="M17 11v10M12 16h11" strokeWidth="3" /></Svg></SheetTab>
          <SheetTab $w={48}><Svg w={23} h={22} stroke="#666" sw={1.700}><path d="M1 1l4 2.500h5l5-2.500v9M1 1v13l5 2h5M8 4v12" /><path d="M17 11v10M12 16h11" strokeWidth="3" /></Svg></SheetTab>
        </SheetTabs>

        <Status>
          <Text size={16.400} w={71}>25 marks</Text>
          <IconSlot $w={27} />
          <Text size={16.400} w={134}>1 row by 1 column</Text>
          <IconSlot $w={26} />
          <Text size={16.400} w={247}>SUM(Total Assets Us B): 99,876</Text>
          <Spacer />
          <StatusCell $w={193} $pl={8}>
            <Svg w={16} h={20} stroke="#555" sw={1.700}><circle cx="8" cy="5" r="4" /><path d="M1 19v-3q0-4 4-4h6q4 0 4 4v3z" /></Svg>
            <IconSlot $w={15} />
            <Text size={16.400} w={105}>Abitha Selvan</Text>
            <IconSlot $w={25} />
            <Caret w={11} c="#000" />
          </StatusCell>
          <StatusCell $w={41} />
          <StatusCell $w={40} />
          <StatusCell $w={72} />
          <StatusCell $w={108} $pl={11} $gap={15}>
            <Svg w={9} h={11} stroke="none"><path d="M0 0h2v11H0zM9 0v11L3 5.500z" fill="#b5b5b5" /></Svg>
            <Svg w={8} h={11} stroke="none"><path d="M7 0v11L1 5.500z" fill="#b5b5b5" /></Svg>
            <Svg w={8} h={11} stroke="none"><path d="M1 0v11l6-5.500z" fill="#b5b5b5" /></Svg>
            <Svg w={9} h={11} stroke="none"><path d="M7 0h2v11H7zM0 0v11l6-5.500z" fill="#b5b5b5" /></Svg>
          </StatusCell>
          <StatusCell $w={101} $pl={10} $gap={15}>
            <Svg w={17} h={17} stroke="none">{[0, 6, 12].flatMap((x) => [0, 6, 12].map((y) => <rect key={`${x}-${y}`} x={x} y={y} width="5" height="4.800" fill="#b0b0b0" />))}</Svg>
            <Svg w={17} h={17} stroke="none"><path d="M0 0h17v10H0zM0 12h5v5H0zM6 12h5v5H6zM12 12h5v5h-5z" fill="#b0b0b0" /></Svg>
            <Svg w={16} h={17} stroke="none"><path d="M0 0h16v17H0z" fill="#666" /></Svg>
          </StatusCell>
        </Status>

        <Taskbar>
          <Start><Svg w={24} h={24} stroke="none"><path d="M0 3.500L9.500 2v9.300H0zM11 1.800L24 0v11.300H11zM0 12.700h9.500V22L0 20.500zM11 12.700h13V24l-13-1.800z" fill="#fff" /></Svg></Start>
          <TaskSearch>
            <Search s={26} c="#111" sw={1.8} />
            <IconSlot $w={18} />
            <Text {...sys} size={21.500} w={193}>Type here to search</Text>
            <IconSlot $w={65} />
            <Jellies />
          </TaskSearch>
          <TaskView><Svg w={25} h={24} stroke="#fff" sw={1.8}><path d="M1 0v4h15V0M1 8h15v9H1zM1 24v-3h15v3M21 0v5M21 13v11" /><path d="M18.500 7h5v5h-5z" fill="#fff" stroke="none" /></Svg></TaskView>
          <TaskApp $run><Edge /></TaskApp>
          <TaskApp $run><Explorer /></TaskApp>
          <TaskApp><Store /></TaskApp>
          <TaskApp><Mail /></TaskApp>
          <TaskApp $run><Firefox /></TaskApp>
          <TaskApp $run $on><TableauApp /></TaskApp>
          <TaskApp $run><Chrome /></TaskApp>
          <TaskApp $run><VsCode /></TaskApp>
          <TaskApp $run><Word /></TaskApp>
          <TaskApp $run><Notepad /></TaskApp>
          <TaskApp $run><Yandex /></TaskApp>
          <TaskApp $run><PowerPoint /></TaskApp>
          <Spacer />
          <Tray $ml={0}><Weather /></Tray>
          <Tray $ml={11}><Text font={SYS} size={20.500} color="#fff" w={44}>32°C</Text></Tray>
          <Tray $ml={13}><Text font={SYS} size={20.500} color="#fff" w={88}>Light rain</Text></Tray>
          <Tray $ml={38}><Svg w={18} h={10} stroke="#fff"><path d="M1 9l8-8 8 8" /></Svg></Tray>
          <Tray $ml={19}><Svg w={18} h={25} stroke="#fff" sw={1.700}><path d="M3 3c3-2.500 8-2.500 11 0M3 22c3 2.500 8 2.500 11 0M1 7h11v11H1zM12 10l4-1v7l-4-1" /><circle cx="7" cy="12.500" r="2" /></Svg></Tray>
          <Tray $ml={14}><Svg w={25} h={21} stroke="#fff" sw={1.700}><path d="M9 1h15v14H5v-5M1 1h6v8H1zM4 9v9h3M14 15v4M9 20h11" /></Svg></Tray>
          <Tray $ml={12}><Svg w={26} h={20} stroke="#fff" sw={1.700}><path d="M1 7h4l5-6v18l-5-6H1zM14 7c1.500 2 1.500 4 0 6M17.500 4c3 4 3 8 0 12M21.500 1c4.500 5 4.500 13 0 18" /></Svg></Tray>
          <Tray $ml={14}><Text font={SYS} size={18} color="#fff" w={35}>ENG</Text></Tray>
          <Clock>
            <Text font={SYS} size={17.500} color="#fff" w={40}>17:50</Text>
            <Text font={SYS} size={17.500} color="#fff" w={89}>24-04-2023</Text>
          </Clock>
          <Tray $ml={26}>
            <svg width={38} height={40} viewBox="0 0 38 40">
              <path d="M0 1h26v20H12l-5 5v-5H0z" fill="#fff" /><path d="M4 6h18M4 11h18M4 16h10" stroke="#1d2c34" strokeWidth="2" />
              <circle cx="25" cy="27" r="12" fill="#3a3f42" stroke="#888" strokeWidth="1.500" />
              <text x="25" y="33" textAnchor="middle" fontFamily="'Open Sans', sans-serif" fontSize="17" fontWeight="600" fill="#fff">2</text>
            </svg>
          </Tray>
          <Tray $ml={17}><Svg w={7} h={61} stroke="#7b868b" sw={1.500}><path d="M1 0v61" /></Svg></Tray>
        </Taskbar>
      </Win>
    </Page>
  );
}
